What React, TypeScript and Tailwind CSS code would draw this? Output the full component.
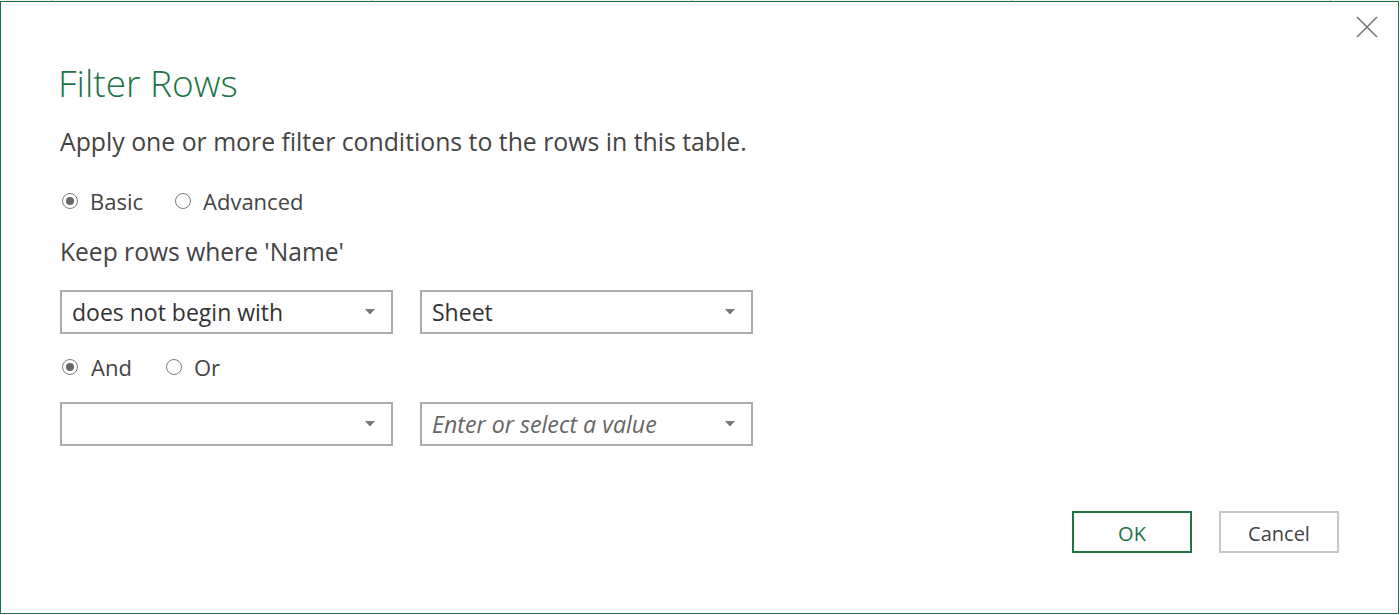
import React from 'react';

const font = { fontFamily: '"Open Sans", "Noto Sans", sans-serif' };

function Radio({ label, checked, gap }: { label: string; checked?: boolean; gap: string }) {
  return (
    <label className={`flex items-center ${gap}`}>
      <span className="flex h-4 w-4 items-center justify-center rounded-full border border-[#7a7a7a] bg-white">
        {checked && <span className="h-2 w-2 rounded-full bg-[#666]" />}
      </span>
      <span className="text-[22px] text-[#444]">{label}</span>
    </label>
  );
}

function Caret() {
  return (
    <svg width="10" height="6" viewBox="0 0 10 6" className="shrink-0">
      <path d="M0 0 H10 L5 5.5 Z" fill="#777" />
    </svg>
  );
}

function Select({ value, placeholder }: { value?: string; placeholder?: string }) {
  return (
    <div className="flex h-[44px] w-[333px] items-center justify-between border-2 border-[#ababab] bg-white pl-[10px] pr-[16px]">
      {value ? (
        <span className="text-[23px] text-[#333]">{value}</span>
      ) : placeholder ? (
        <span className="text-[23.2px] italic text-[#666]">{placeholder}</span>
      ) : (
        <span />
      )}
      <Caret />
    </div>
  );
}

export default function App() {
  return (
    <div className="flex h-[615px] w-[1400px] flex-col bg-white" style={font}>
      {/* strip of the sheet behind the dialog */}
      <div className="flex h-px w-full bg-[#f0f0f0]">
        <div className="ml-[52px] h-px w-px bg-[#b0b0b0]" />
        <div className="ml-[319px] h-px w-px bg-[#b0b0b0]" />
        <div className="ml-[319px] h-px w-px bg-[#b0b0b0]" />
        <div className="ml-[319px] h-px w-px bg-[#b0b0b0]" />
        <div className="ml-[317px] h-px w-px bg-[#b0b0b0]" />
      </div>

      <div className="mr-px mb-px flex h-[613px] flex-col border border-[#217346]">
        <div className="flex items-start justify-between">
          <h1 className="mt-[58px] ml-[57px] flex h-[46px] items-center text-[37px] font-light text-[#217346]">
            Filter Rows
          </h1>
          <button className="mt-[13px] mr-[19px] flex h-[24px] w-[24px] items-center justify-center">
            <svg width="22" height="22" viewBox="0 0 22 22">
              <path d="M1 1 L21 21 M21 1 L1 21" stroke="#777" strokeWidth="1.6" />
            </svg>
          </button>
        </div>

        <div className="flex flex-col pl-[59px]">
          <p className="mt-[20px] flex h-[32px] items-center text-[24.8px] text-[#444]">
            Apply one or more filter conditions to the rows in this table.
          </p>

          <div className="mt-[29px] flex h-[28px] items-center gap-[32px] pl-[2px]">
            <Radio label="Basic" checked gap="gap-[12px]" />
            <Radio label="Advanced" gap="gap-[12px]" />
          </div>

          <p className="mt-[23px] flex h-[28px] items-center text-[24.6px] text-[#444]">
            Keep rows where 'Name'
          </p>

          <div className="mt-[24px] flex gap-[27px]">
            <Select value="does not begin with" />
            <Select value="Sheet" />
          </div>

          <div className="mt-[19px] flex h-[28px] items-center gap-[34px] pl-[2px]">
            <Radio label="And" checked gap="gap-[13px]" />
            <Radio label="Or" gap="gap-[12px]" />
          </div>

          <div className="mt-[21px] flex gap-[27px]">
            <Select />
            <Select placeholder="Enter or select a value" />
          </div>

          <div className="mt-[65px] flex justify-end gap-[27px] pr-[59px]">
            <button className="flex h-[42px] w-[120px] items-center justify-center border-2 border-[#217346] pt-[3px] text-[20px] text-[#217346]">
              OK
            </button>
            <button className="flex h-[42px] w-[120px] items-center justify-center border-2 border-[#c8c8c8] pt-[3px] text-[20px] text-[#444]">
              Cancel
            </button>
          </div>
        </div>
      </div>
    </div>
  );
}
